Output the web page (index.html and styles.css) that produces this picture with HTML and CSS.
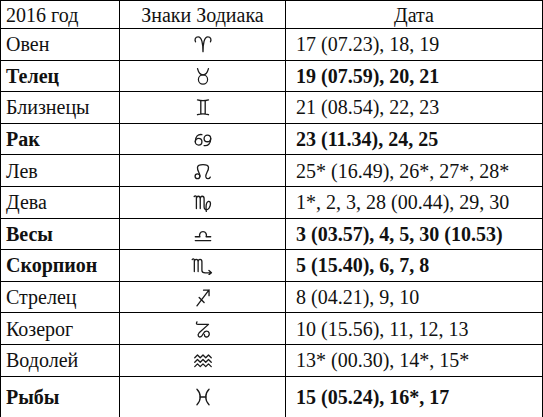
FILE: index.html
```html
<!DOCTYPE html>
<html lang="ru">
<head>
<meta charset="utf-8">
<link rel="stylesheet" href="styles.css">
</head>
<body>
<table class="zodiac">
  <colgroup><col class="c-year"><col class="c-sign"><col class="c-date"></colgroup>
  <tr class="head">
    <td class="name">2016 год</td>
    <td class="sign">Знаки Зодиака</td>
    <td class="date center">Дата</td>
  </tr>
  <tr>
    <td class="name">Овен</td>
    <td class="sign"><svg class="glyph" viewBox="0 0 20 18"><path d="M10 16 C10 9 9 2.5 5.5 2.5 C3 2.5 2.2 5 3.2 7 M10 16 C10 9 11 2.5 14.5 2.5 C17 2.5 17.8 5 16.8 7"/></svg></td>
    <td class="date">17 (07.23), 18, 19</td>
  </tr>
  <tr class="bold">
    <td class="name">Телец</td>
    <td class="sign"><svg class="glyph" viewBox="0 0 20 20"><circle cx="10" cy="13.5" r="4.6"/><path d="M4.5 2.5 C5.5 6.5 7.5 8.9 10 8.9 C12.5 8.9 14.5 6.5 15.5 2.5"/></svg></td>
    <td class="date">19 (07.59), 20, 21</td>
  </tr>
  <tr>
    <td class="name">Близнецы</td>
    <td class="sign"><svg class="glyph" viewBox="0 0 20 18"><path d="M5 2.5 Q10 4 15 2.5 M5 16 Q10 14.5 15 16 M8 3.3 V15.2 M12 3.3 V15.2"/></svg></td>
    <td class="date">21 (08.54), 22, 23</td>
  </tr>
  <tr class="bold">
    <td class="name">Рак</td>
    <td class="sign"><svg class="glyph" viewBox="0 0 20 18"><circle cx="6" cy="11.5" r="3"/><path d="M3 11.5 C3 6.5 5.5 4.5 9 5"/><circle cx="14" cy="8.5" r="3"/><path d="M17 8.5 C17 13.5 14.5 15.5 11 15"/></svg></td>
    <td class="date">23 (11.34), 24, 25</td>
  </tr>
  <tr>
    <td class="name">Лев</td>
    <td class="sign"><svg class="glyph" viewBox="0 0 20 18"><circle cx="5" cy="13.8" r="2.2"/><path d="M7.2 13.8 C7.2 10.5 4.6 9 5 5.6 C5.4 2.3 14.6 2.3 15 5.6 C15.4 9 12 11 12.6 14.4 C13 16.4 15.6 16.6 16.6 14.6"/></svg></td>
    <td class="date">25* (16.49), 26*, 27*, 28*</td>
  </tr>
  <tr>
    <td class="name">Дева</td>
    <td class="sign"><svg class="glyph" viewBox="0 0 20 18"><path d="M2 4 Q3 2.8 4 4 V15 M4 6 C4 3 7.5 3 7.5 6 V15 M7.5 6 C7.5 3 11 3 11 6 V13.5 C11 16.5 13.5 17 15.5 14.5 C17.5 11.5 17 8 15 8.5 C13 9 12.5 13 13 17.5"/></svg></td>
    <td class="date">1*, 2, 3, 28 (00.44), 29, 30</td>
  </tr>
  <tr class="bold">
    <td class="name">Весы</td>
    <td class="sign"><svg class="glyph" viewBox="0 0 20 18"><path d="M3 15 H17 M3 11.5 H7.2 C6.2 9.5 7.5 6.8 10 6.8 C12.5 6.8 13.8 9.5 12.8 11.5 H17"/></svg></td>
    <td class="date">3 (03.57), 4, 5, 30 (10.53)</td>
  </tr>
  <tr class="bold">
    <td class="name">Скорпион</td>
    <td class="sign"><svg class="glyph wide" viewBox="0 0 24 18"><path d="M2 4 Q3 2.8 4 4 V15 M4 6 C4 3 7.5 3 7.5 6 V15 M7.5 6 C7.5 3 11 3 11 6 V14 Q11 16.2 14 16.2 H19.5 M17.5 14 L19.8 16.2 L17.5 18"/></svg></td>
    <td class="date">5 (15.40), 6, 7, 8</td>
  </tr>
  <tr>
    <td class="name">Стрелец</td>
    <td class="sign"><svg class="glyph" viewBox="0 0 20 18"><path d="M4.5 17 L15.5 2.5 M10.5 2.8 H15.5 V7.8 M6.5 9.5 L11 14"/></svg></td>
    <td class="date">8 (04.21), 9, 10</td>
  </tr>
  <tr>
    <td class="name">Козерог</td>
    <td class="sign"><svg class="glyph" viewBox="0 0 20 18"><path d="M4.5 2.5 Q3.2 4.8 5.5 4.8 H15 L6.5 12.5 C4.5 14.5 6 17 8.2 16 C10 15.2 10.2 11 13 11 C15.8 11 16.5 14 14.8 15.6 C13.2 17 11.2 16 11.3 14.2"/></svg></td>
    <td class="date">10 (15.56), 11, 12, 13</td>
  </tr>
  <tr>
    <td class="name">Водолей</td>
    <td class="sign"><svg class="glyph" viewBox="0 0 20 18"><path d="M2.5 7 L5 4.5 L7.5 7 L10 4.5 L12.5 7 L15 4.5 L17.5 7 M2.5 11 L5 8.5 L7.5 11 L10 8.5 L12.5 11 L15 8.5 L17.5 11 M2.5 15 L5 12.5 L7.5 15 L10 12.5 L12.5 15 L15 12.5 L17.5 15"/></svg></td>
    <td class="date">13* (00.30), 14*, 15*</td>
  </tr>
  <tr class="bold last">
    <td class="name">Рыбы</td>
    <td class="sign"><svg class="glyph" viewBox="0 0 20 18"><path d="M4.5 2 C8.5 6 8.5 12 4.5 16 M15.5 2 C11.5 6 11.5 12 15.5 16 M7 9 H13"/></svg></td>
    <td class="date">15 (05.24), 16*, 17</td>
  </tr>
</table>
</body>
</html>
```

FILE: styles.css
```css
html, body {
  margin: 0;
  padding: 0;
  background: #fff;
}

.zodiac {
  border-collapse: collapse;
  width: 542px;
  table-layout: fixed;
  font-family: "Liberation Serif", "Times New Roman", serif;
  font-size: 20px;
  color: #111;
}

.c-year { width: 119px; }
.c-sign { width: 166px; }
.c-date { width: 257px; }

.zodiac td {
  border: 1px solid #000;
  padding: 0;
  height: 30.6px;
  vertical-align: middle;
  line-height: 22px;
  white-space: nowrap;
}

.zodiac .head td { height: 27px; }
.zodiac .last td { height: 40.5px; }

.name { padding-left: 5px !important; }
.sign { text-align: center; }
.date { padding-left: 10px !important; }
.date.center { text-align: center; padding-left: 0 !important; }

.bold td { font-weight: bold; }

.glyph {
  display: block;
  margin: 0 auto;
  width: 22px;
  height: 20px;
  fill: none;
  stroke: #1a1a1a;
  stroke-width: 1.2;
  stroke-linecap: round;
  stroke-linejoin: round;
}
.glyph.wide { width: 26px; }
```
